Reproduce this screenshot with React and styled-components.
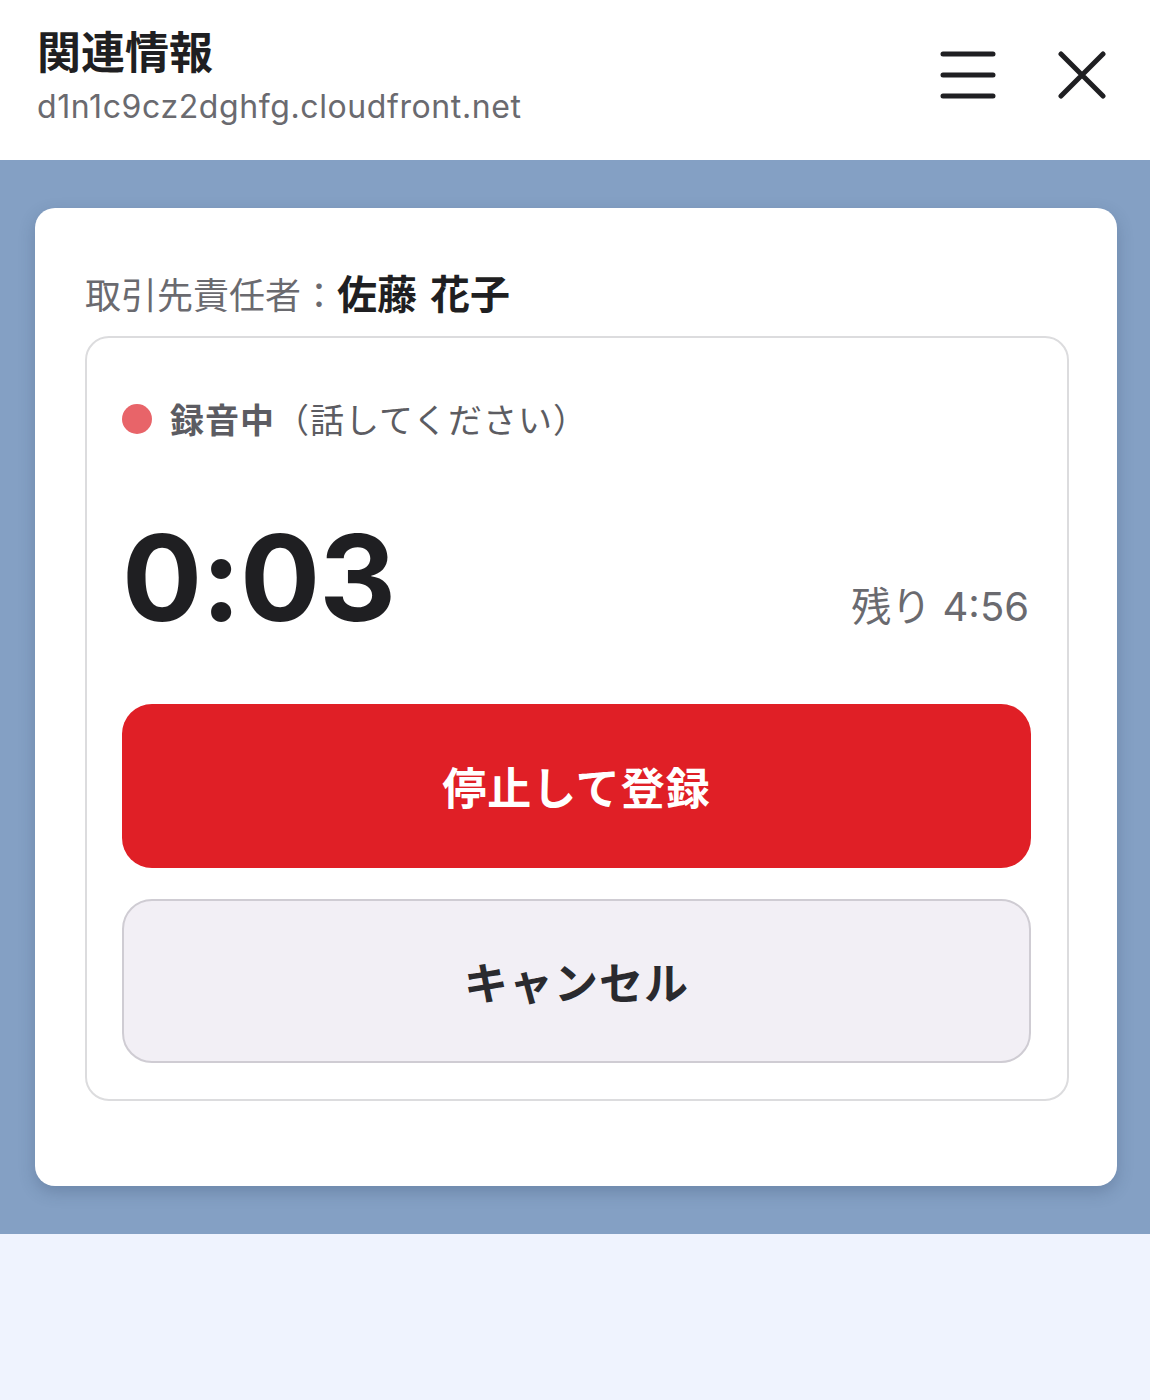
import React from "react";
import styled, { createGlobalStyle } from "styled-components";

const GlobalStyle = createGlobalStyle`
  html, body {
    margin: 0;
    padding: 0;
    background: #eff3fe;
    font-family: Inter, "Noto Sans CJK JP", "Noto Sans", sans-serif;
  }
  * { box-sizing: border-box; }
`;

const Page = styled.div`
  width: 1150px;
  min-height: 1400px;
  background: #eff3fe;
`;

const Header = styled.header`
  height: 160px;
  background: #ffffff;
  display: flex;
  align-items: flex-start;
  justify-content: space-between;
  padding: 22px 44px 0 37px;
`;

const TitleBlock = styled.div`
  display: flex;
  flex-direction: column;
`;

const Title = styled.h1`
  margin: 0;
  font-family: "Noto Sans CJK JP", sans-serif;
  font-size: 44px;
  font-weight: 700;
  line-height: 56px;
  color: #1f1f22;
`;

const Url = styled.div`
  margin-top: 9px;
  font-family: Inter, "Noto Sans", sans-serif;
  font-size: 32px;
  line-height: 40px;
  letter-spacing: 0.6px;
  color: #6a6a6f;
`;

const Icons = styled.div`
  display: flex;
  align-items: center;
  gap: 62px;
  margin-top: 29px;
`;

const IconButton = styled.button`
  border: none;
  background: none;
  padding: 0;
  display: flex;
  color: #1f1f22;
`;

const Overlay = styled.section`
  background: #84a0c4;
  padding: 48px 33px 48px 35px;
`;

const Card = styled.div`
  background: #ffffff;
  border-radius: 20px;
  padding: 62px 48px 85px 50px;
  box-shadow: 0 6px 16px rgba(40, 60, 90, 0.25);
`;

const Contact = styled.div`
  font-family: "Noto Sans CJK JP", sans-serif;
  font-size: 36px;
  line-height: 44px;
  color: #6a6a6f;
  margin-bottom: 21px;
  strong {
    color: #1f1f22;
    font-weight: 700;
    font-size: 40px;
    word-spacing: 4px;
  }
`;

const Panel = styled.div`
  border: 2px solid #dcdcde;
  border-radius: 24px;
  padding: 61px 36px 36px 35px;
  display: flex;
  flex-direction: column;
`;

const Status = styled.div`
  display: flex;
  align-items: center;
  gap: 18px;
  font-family: "Noto Sans CJK JP", sans-serif;
  font-size: 34px;
  line-height: 40px;
  letter-spacing: 1px;
  color: #5c5c62;
  b { font-weight: 700; }
`;

const Dot = styled.span`
  width: 30px;
  height: 30px;
  border-radius: 50%;
  background: #e86469;
  flex: none;
`;

const TimerRow = styled.div`
  display: flex;
  align-items: baseline;
  justify-content: space-between;
  margin: 77px 0 64px;
`;

const Elapsed = styled.div`
  font-family: Inter, sans-serif;
  font-size: 119px;
  font-weight: 700;
  line-height: 124px;
  color: #1f1f22;
  letter-spacing: -1px;
`;

const Remaining = styled.div`
  font-family: Inter, "Noto Sans CJK JP", sans-serif;
  font-size: 40px;
  color: #6a6a6f;
  margin-right: 2px;
`;

const Actions = styled.div`
  display: flex;
  flex-direction: column;
  gap: 31px;
`;

const ActionButton = styled.button`
  height: 164px;
  width: 100%;
  border-radius: 30px;
  font-family: "Noto Sans CJK JP", sans-serif;
  font-size: 44px;
  font-weight: 700;
  letter-spacing: 1px;
  background: ${(p) => (p.$primary ? "#e01f26" : "#f2eff5")};
  color: ${(p) => (p.$primary ? "#ffffff" : "#2a2a2e")};
  border: ${(p) => (p.$primary ? "none" : "2px solid #cfccd3")};
`;

export default function App() {
  return (
    <Page>
      <GlobalStyle />
      <Header>
        <TitleBlock>
          <Title>関連情報</Title>
          <Url>d1n1c9cz2dghfg.cloudfront.net</Url>
        </TitleBlock>
        <Icons>
          <IconButton aria-label="menu">
            <svg width="56" height="48" viewBox="0 0 56 48" fill="none">
              <path
                d="M3 3h50M3 24h50M3 45h50"
                stroke="currentColor"
                strokeWidth="5"
                strokeLinecap="round"
              />
            </svg>
          </IconButton>
          <IconButton aria-label="close">
            <svg width="48" height="48" viewBox="0 0 48 48" fill="none">
              <path
                d="M3 3l42 42M45 3L3 45"
                stroke="currentColor"
                strokeWidth="5"
                strokeLinecap="round"
              />
            </svg>
          </IconButton>
        </Icons>
      </Header>
      <Overlay>
        <Card>
          <Contact>
            取引先責任者：<strong>佐藤 花子</strong>
          </Contact>
          <Panel>
            <Status>
              <Dot />
              <span>
                <b>録音中</b>（話してください）
              </span>
            </Status>
            <TimerRow>
              <Elapsed>0:03</Elapsed>
              <Remaining>残り 4:56</Remaining>
            </TimerRow>
            <Actions>
              <ActionButton $primary>停止して登録</ActionButton>
              <ActionButton>キャンセル</ActionButton>
            </Actions>
          </Panel>
        </Card>
      </Overlay>
    </Page>
  );
}
